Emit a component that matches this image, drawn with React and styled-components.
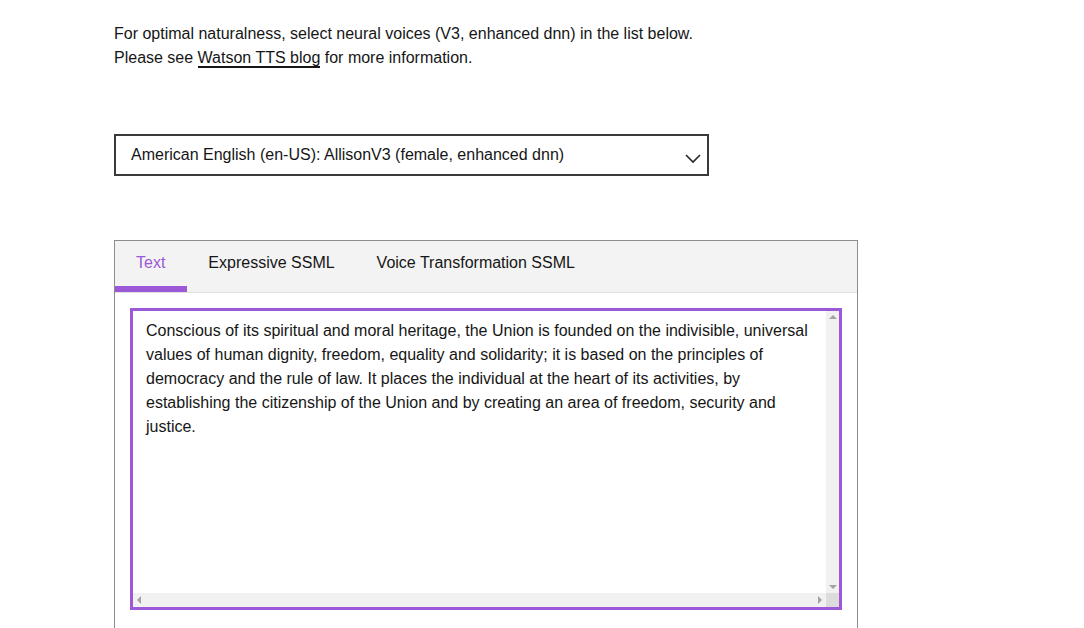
import React from "react";
import styled, { createGlobalStyle, css } from "styled-components";

const Global = createGlobalStyle`
  html, body { margin: 0; padding: 0; background: #ffffff; }
  body { font-family: "Liberation Sans", Arial, sans-serif; color: #161616; }
`;

const Page = styled.div`
  padding: 22px 0 0 114px;
  width: 744px;
`;

const Intro = styled.p`
  margin: 0;
  font-size: 16px;
  line-height: 24px;
  color: #161616;
`;

const Link = styled.a`
  color: #161616;
  text-decoration: none;
  border-bottom: 2px solid #161616;
`;

const SelectBox = styled.div`
  margin-top: 64px;
  width: 595px;
  height: 42px;
  box-sizing: border-box;
  border: 2px solid #3a3a3a;
  display: flex;
  align-items: center;
  justify-content: space-between;
  padding: 0 5px 0 15px;
  font-size: 16px;
  color: #161616;
`;

const Chevron = () => (
  <svg width="18" height="12" viewBox="0 0 18 12" style={{ marginTop: 8 }}>
    <path d="M2 2 L9 9 L16 2" fill="none" stroke="#262626" strokeWidth="1.6" />
  </svg>
);

const Panel = styled.div`
  margin-top: 64px;
  border: 1px solid #8d8d8d;
  border-bottom: none;
  height: 420px;
`;

const TabBar = styled.div`
  display: flex;
  background: #f3f3f3;
  height: 51px;
  border-bottom: 1px solid #e0e0e0;
`;

const Tab = styled.div`
  padding: 0 21px 8px;
  display: flex;
  align-items: center;
  font-size: 16px;
  color: ${(p) => (p.$active ? "#9b59d8" : "#161616")};
  box-shadow: ${(p) => (p.$active ? "inset 0 -6px 0 #9b59d8" : "none")};
  padding-right: ${(p) => (p.$active ? "22px" : "21px")};
`;

const Body = styled.div`
  padding: 15px;
`;

const Editor = styled.div`
  height: 302px;
  box-sizing: border-box;
  border: 3px solid #9b59d8;
  display: grid;
  grid-template-columns: 1fr 13px;
  grid-template-rows: 1fr 14px;
  background: #ffffff;
`;

const TextArea = styled.textarea`
  display: block;
  width: 100%;
  height: 100%;
  box-sizing: border-box;
  border: none;
  outline: none;
  resize: none;
  overflow: hidden;
  padding: 8px 0 0 13px;
  margin: 0;
  font-family: "Liberation Sans", Arial, sans-serif;
  font-size: 16px;
  line-height: 24px;
  color: #161616;
  background: #ffffff;
`;

const ScrollTrack = styled.div`
  background: #f1f1f1;
  display: flex;
  flex-direction: ${(p) => (p.$vertical ? "column" : "row")};
  justify-content: space-between;
`;

const Corner = styled.div`
  background: #dcdcdc;
`;

const ArrowButton = styled.div`
  width: 13px;
  height: ${(p) => (p.$dir === "left" || p.$dir === "right" ? "14px" : "13px")};
  display: flex;
  align-items: center;
  justify-content: center;

  &::before {
    content: "";
    display: block;
    width: 0;
    height: 0;
    ${(p) =>
      p.$dir === "up" &&
      css`
        border-left: 4px solid transparent;
        border-right: 4px solid transparent;
        border-bottom: 4px solid #a3a3a3;
        margin-top: -1px;
      `}
    ${(p) =>
      p.$dir === "down" &&
      css`
        border-left: 4px solid transparent;
        border-right: 4px solid transparent;
        border-top: 4px solid #a3a3a3;
        margin-top: 1px;
      `}
    ${(p) =>
      p.$dir === "left" &&
      css`
        border-top: 4px solid transparent;
        border-bottom: 4px solid transparent;
        border-right: 4px solid #a3a3a3;
        margin-left: -1px;
      `}
    ${(p) =>
      p.$dir === "right" &&
      css`
        border-top: 4px solid transparent;
        border-bottom: 4px solid transparent;
        border-left: 4px solid #a3a3a3;
        margin-left: 1px;
      `}
  }
`;

const text =
  "Conscious of its spiritual and moral heritage, the Union is founded on the indivisible, universal values of human dignity, freedom, equality and solidarity; it is based on the principles of democracy and the rule of law. It places the individual at the heart of its activities, by establishing the citizenship of the Union and by creating an area of freedom, security and justice.";

export default function App() {
  return (
    <>
      <Global />
      <Page>
        <Intro>
          For optimal naturalness, select neural voices (V3, enhanced dnn) in the list below.
          <br />
          Please see <Link href="#">Watson TTS blog</Link> for more information.
        </Intro>
        <SelectBox>
          <span>American English (en-US): AllisonV3 (female, enhanced dnn)</span>
          <Chevron />
        </SelectBox>
        <Panel>
          <TabBar>
            <Tab $active>Text</Tab>
            <Tab>Expressive SSML</Tab>
            <Tab>Voice Transformation SSML</Tab>
          </TabBar>
          <Body>
            <Editor>
              <TextArea defaultValue={text} spellCheck={false} />
              <ScrollTrack $vertical>
                <ArrowButton $dir="up" />
                <ArrowButton $dir="down" />
              </ScrollTrack>
              <ScrollTrack>
                <ArrowButton $dir="left" />
                <ArrowButton $dir="right" />
              </ScrollTrack>
              <Corner />
            </Editor>
          </Body>
        </Panel>
      </Page>
    </>
  );
}
